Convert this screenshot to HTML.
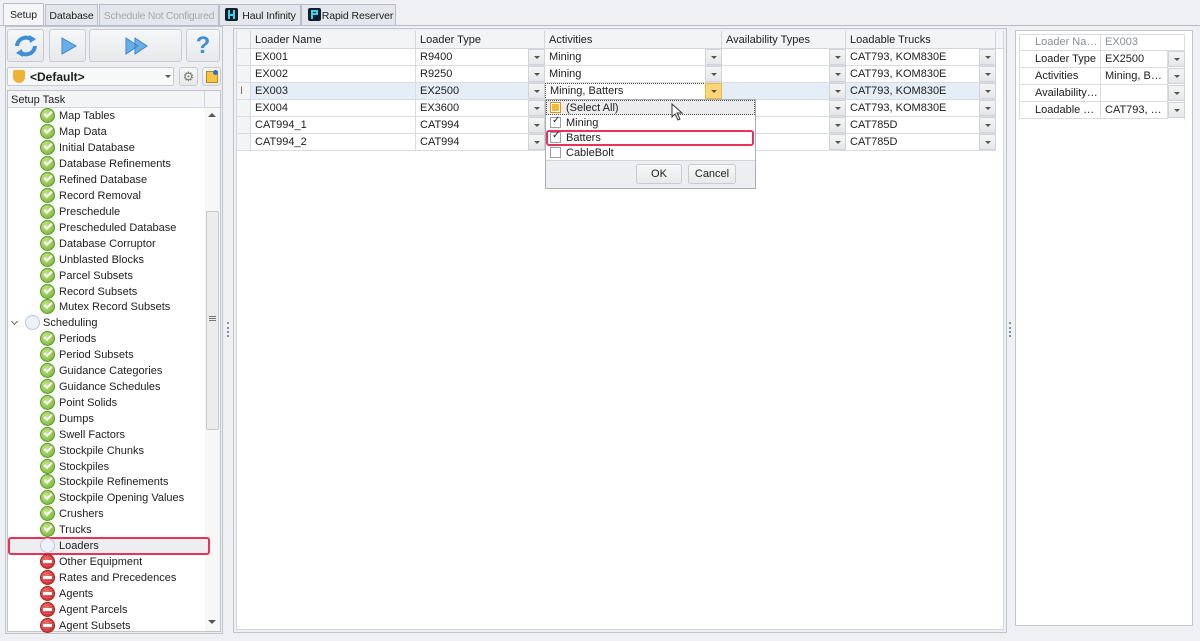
<!DOCTYPE html>
<html><head><meta charset="utf-8"><style>
*{box-sizing:border-box;margin:0;padding:0}
body{width:1200px;height:641px;background:#eef0f3;font:11px "Liberation Sans",sans-serif;color:#1e1e1e;position:relative;overflow:hidden}
.a{position:absolute}
.tab{position:absolute;top:4px;height:21px;border:1px solid #b9bec6;border-bottom:none;background:#e3e6ea;padding:5px 0 0;text-align:center;font-size:10.5px;white-space:nowrap;overflow:hidden;letter-spacing:-0.1px}
.btn{position:absolute;border:1px solid #c7ccd3;border-radius:3px;background:linear-gradient(#f6f7f8,#e6e8eb)}
.tr{position:absolute;left:59px;height:16px;line-height:18px;white-space:nowrap}
.ic{position:absolute;left:40px;width:15px;height:15px;border-radius:50%}
.g{background:radial-gradient(circle at 40% 35%,#c4e88a,#6cae2c);border:1px solid #5c9a24}
.g:after{content:"";position:absolute;left:3px;top:2px;width:6px;height:3px;border-left:2px solid #fff;border-bottom:2px solid #fff;transform:rotate(-45deg)}
.r{background:radial-gradient(circle at 40% 35%,#f07070,#c22525);border:1px solid #a81c1c}
.r:after{content:"";position:absolute;left:2px;top:5px;width:9px;height:3px;background:#fff}
.e{background:#eef2f8;border:1px solid #b7c4d8}
.c{position:absolute;height:17px;line-height:17px;padding-left:4px;border-right:1px solid #d9dce0;border-bottom:1px solid #d9dce0;white-space:nowrap;overflow:hidden;text-overflow:ellipsis}
.dd{position:absolute;width:17px;height:16px;background:linear-gradient(#f4f5f6,#e4e6e9);border:1px solid #d0d3d8}
.dd:after{content:"";position:absolute;left:5px;top:6px;border:3px solid transparent;border-top:3px solid #555;border-bottom:none}
.h{position:absolute;top:31px;height:18px;line-height:18px;padding-left:4px;background:#f3f4f6;border-right:1px solid #d3d6db;border-bottom:1px solid #d3d6db}
.cb{position:absolute;left:5px;width:11px;height:11px;border:1px solid #9aa0a8;background:#fff}
</style></head><body>
<div class="tab" style="left:3px;width:41px;top:3px;height:23px;background:#f5f6f8">Setup</div>
<div class="tab" style="left:45px;width:53px">Database</div>
<div class="tab" style="left:99px;width:120px;color:#a5a8ad;letter-spacing:-0.3px">Schedule Not Configured</div>
<div class="tab" style="left:219px;width:82px;padding-left:18px">Haul Infinity</div>
<div class="a" style="left:225px;top:8px;width:13px;height:13px;background:#0f1d2e;border-radius:2px"><div class="a" style="left:3px;top:2px;width:2px;height:9px;background:#35d4e6"></div><div class="a" style="left:8px;top:2px;width:2px;height:9px;background:#35d4e6"></div><div class="a" style="left:3px;top:6px;width:7px;height:2px;background:#35d4e6"></div></div>
<div class="tab" style="left:301px;width:95px;padding-left:18px">Rapid Reserver</div>
<div class="a" style="left:308px;top:8px;width:13px;height:13px;background:#0f1d2e;border-radius:2px"><div class="a" style="left:3px;top:2px;width:7px;height:5px;border:2px solid #35d4e6"></div><div class="a" style="left:3px;top:7px;width:2px;height:4px;background:#35d4e6"></div></div>
<div class="a" style="left:0;top:25px;width:1200px;height:1px;background:#b9bec6"></div>

<div class="a" style="left:5px;top:26px;width:218px;height:608px;background:#eceef1;border:1px solid #c0c5cc"></div>
<div class="btn" style="left:7px;top:29px;width:37px;height:33px"><svg class="a" style="left:3px;top:2px" width="30" height="28" viewBox="0 0 30 28"><path d="M6 14a9 9 0 0 1 15-6" fill="none" stroke="#3d8fd6" stroke-width="4"/><path d="M24 14a9 9 0 0 1-15 6" fill="none" stroke="#3d8fd6" stroke-width="4"/><path d="M18 3l7 4-6 4z M12 25l-7-4 6-4z" fill="#3d8fd6"/></svg></div>
<div class="btn" style="left:49px;top:29px;width:37px;height:33px"><svg class="a" style="left:10px;top:7px" width="18" height="18"><path d="M2 1L16 9 2 17z" fill="#6aaee8" stroke="#3d85c8"/></svg></div>
<div class="btn" style="left:89px;top:29px;width:93px;height:33px"><svg class="a" style="left:34px;top:7px" width="26" height="18"><path d="M2 1L14 9 2 17z M11 1L23 9 11 17z" fill="#6aaee8" stroke="#3d85c8"/></svg></div>
<div class="btn" style="left:186px;top:29px;width:34px;height:33px;text-align:center;font:bold 24px 'Liberation Sans';color:#3d8fd6;line-height:31px">?</div>
<div class="btn" style="left:7px;top:67px;width:167px;height:19px;background:#f7f8f9;border-radius:2px"><div class="a" style="left:5px;top:2px;width:12px;height:13px;background:#f0b13a;border-radius:2px 2px 6px 6px"></div><span class="a" style="left:22px;top:2px;font-weight:bold;font-size:12px">&lt;Default&gt;</span><div class="a" style="left:157px;top:7px;border:3px solid transparent;border-top:3px solid #555"></div></div>
<div class="btn" style="left:179px;top:67px;width:19px;height:19px;text-align:center;line-height:17px;color:#777;font-size:13px">⚙</div>
<div class="btn" style="left:202px;top:67px;width:19px;height:19px"><div class="a" style="left:3px;top:3px;width:12px;height:12px;background:#f5c542;border:1px solid #b88a1a"></div><div class="a" style="left:10px;top:2px;width:5px;height:5px;border-radius:50%;background:#2d6fd0"></div></div>
<div class="a" style="left:7px;top:90px;width:214px;height:542px;background:#fff;border:1px solid #c0c5cc"></div>
<div class="a" style="left:8px;top:91px;width:212px;height:17px;background:#f3f4f6;border-bottom:1px solid #d3d6db;padding:3px 3px">Setup Task</div>
<div class="a" style="left:204px;top:91px;width:1px;height:17px;background:#d3d6db"></div>
<div class="a" style="left:205px;top:108px;width:15px;height:523px;background:#f7f7f8"></div>
<div class="a" style="left:208px;top:113px;border:4px solid transparent;border-bottom:4px solid #555;border-top:none"></div>
<div class="a" style="left:208px;top:620px;border:4px solid transparent;border-top:4px solid #555;border-bottom:none"></div>
<div class="a" style="left:206px;top:211px;width:13px;height:219px;background:#ececed;border:1px solid #c5c8cc;border-radius:2px"></div>
<div class="a" style="left:209px;top:316px;width:7px;height:5px;border-top:1px solid #777;border-bottom:1px solid #777"><div style="margin-top:1px;height:1px;background:#777"></div></div>
<div class="a" style="left:8px;top:537px;width:202px;height:18px;background:#eceeef;border:2px solid #e8325a;border-radius:3px"></div>

<div class="ic g" style="top:108px"></div><div class="tr" style="top:107px">Map Tables</div>
<div class="ic g" style="top:124px"></div><div class="tr" style="top:123px">Map Data</div>
<div class="ic g" style="top:140px"></div><div class="tr" style="top:139px">Initial Database</div>
<div class="ic g" style="top:156px"></div><div class="tr" style="top:155px">Database Refinements</div>
<div class="ic g" style="top:172px"></div><div class="tr" style="top:171px">Refined Database</div>
<div class="ic g" style="top:188px"></div><div class="tr" style="top:187px">Record Removal</div>
<div class="ic g" style="top:204px"></div><div class="tr" style="top:203px">Preschedule</div>
<div class="ic g" style="top:220px"></div><div class="tr" style="top:219px">Prescheduled Database</div>
<div class="ic g" style="top:236px"></div><div class="tr" style="top:235px">Database Corruptor</div>
<div class="ic g" style="top:252px"></div><div class="tr" style="top:251px">Unblasted Blocks</div>
<div class="ic g" style="top:268px"></div><div class="tr" style="top:267px">Parcel Subsets</div>
<div class="ic g" style="top:284px"></div><div class="tr" style="top:283px">Record Subsets</div>
<div class="ic g" style="top:299px"></div><div class="tr" style="top:298px">Mutex Record Subsets</div>
<div class="a" style="left:12px;top:319px;width:5px;height:5px;border-right:1px solid #666;border-bottom:1px solid #666;transform:rotate(45deg)"></div>
<div class="ic e" style="left:25px;top:315px"></div><div class="tr" style="left:43px;top:314px">Scheduling</div>
<div class="ic g" style="top:331px"></div><div class="tr" style="top:330px">Periods</div>
<div class="ic g" style="top:347px"></div><div class="tr" style="top:346px">Period Subsets</div>
<div class="ic g" style="top:363px"></div><div class="tr" style="top:362px">Guidance Categories</div>
<div class="ic g" style="top:379px"></div><div class="tr" style="top:378px">Guidance Schedules</div>
<div class="ic g" style="top:395px"></div><div class="tr" style="top:394px">Point Solids</div>
<div class="ic g" style="top:411px"></div><div class="tr" style="top:410px">Dumps</div>
<div class="ic g" style="top:427px"></div><div class="tr" style="top:426px">Swell Factors</div>
<div class="ic g" style="top:443px"></div><div class="tr" style="top:442px">Stockpile Chunks</div>
<div class="ic g" style="top:459px"></div><div class="tr" style="top:458px">Stockpiles</div>
<div class="ic g" style="top:474px"></div><div class="tr" style="top:473px">Stockpile Refinements</div>
<div class="ic g" style="top:490px"></div><div class="tr" style="top:489px">Stockpile Opening Values</div>
<div class="ic g" style="top:506px"></div><div class="tr" style="top:505px">Crushers</div>
<div class="ic g" style="top:522px"></div><div class="tr" style="top:521px">Trucks</div>
<div class="ic e" style="top:538px"></div><div class="tr" style="top:537px">Loaders</div>
<div class="ic r" style="top:554px"></div><div class="tr" style="top:553px">Other Equipment</div>
<div class="ic r" style="top:570px"></div><div class="tr" style="top:569px">Rates and Precedences</div>
<div class="ic r" style="top:586px"></div><div class="tr" style="top:585px">Agents</div>
<div class="ic r" style="top:602px"></div><div class="tr" style="top:601px">Agent Parcels</div>
<div class="ic r" style="top:618px"></div><div class="tr" style="top:617px">Agent Subsets</div>
<div class="a" style="left:0;top:634px;width:1200px;height:7px;background:#eef0f3"></div>

<div class="a" style="left:227px;top:322px;width:2px;height:15px;border-left:2px dotted #8a8f96"></div>
<div class="a" style="left:1009px;top:322px;width:2px;height:15px;border-left:2px dotted #8a8f96"></div>

<div class="a" style="left:233px;top:28px;width:774px;height:605px;background:#fff;border:1px solid #c0c5cc;box-shadow:inset 0 0 0 3px #eef0f3"></div>
<div class="a" style="left:236px;top:31px;width:768px;height:599px;background:#fff;border:1px solid #d3d6db"></div>
<div class="h" style="left:237px;width:14px"></div>
<div class="h" style="left:251px;width:165px">Loader Name</div>
<div class="h" style="left:416px;width:129px">Loader Type</div>
<div class="h" style="left:545px;width:177px">Activities</div>
<div class="h" style="left:722px;width:124px">Availability Types</div>
<div class="h" style="left:846px;width:150px">Loadable Trucks</div>
<div class="h" style="left:996px;width:8px"></div>

<div class="a" style="left:237px;top:83px;width:759px;height:17px;background:#e5edf6"></div>
<div class="c" style="left:237px;top:49px;width:14px;background:#f3f4f6"></div><div class="c" style="left:251px;top:49px;width:165px">EX001</div><div class="c" style="left:416px;top:49px;width:129px">R9400</div><div class="c" style="left:545px;top:49px;width:177px">Mining</div><div class="c" style="left:722px;top:49px;width:124px"></div><div class="c" style="left:846px;top:49px;width:150px">CAT793, KOM830E</div>
<div class="c" style="left:237px;top:66px;width:14px;background:#f3f4f6"></div><div class="c" style="left:251px;top:66px;width:165px">EX002</div><div class="c" style="left:416px;top:66px;width:129px">R9250</div><div class="c" style="left:545px;top:66px;width:177px">Mining</div><div class="c" style="left:722px;top:66px;width:124px"></div><div class="c" style="left:846px;top:66px;width:150px">CAT793, KOM830E</div>
<div class="c" style="left:237px;top:83px;width:14px;background:#f3f4f6;color:#777;padding-left:3px">I</div><div class="c" style="left:251px;top:83px;width:165px">EX003</div><div class="c" style="left:416px;top:83px;width:129px">EX2500</div><div class="c" style="left:545px;top:83px;width:177px;border:1px dotted #555;background:#fff;line-height:15px">Mining, Batters</div><div class="c" style="left:722px;top:83px;width:124px"></div><div class="c" style="left:846px;top:83px;width:150px">CAT793, KOM830E</div>
<div class="c" style="left:237px;top:100px;width:14px;background:#f3f4f6"></div><div class="c" style="left:251px;top:100px;width:165px">EX004</div><div class="c" style="left:416px;top:100px;width:129px">EX3600</div><div class="c" style="left:545px;top:100px;width:177px"></div><div class="c" style="left:722px;top:100px;width:124px"></div><div class="c" style="left:846px;top:100px;width:150px">CAT793, KOM830E</div>
<div class="c" style="left:237px;top:117px;width:14px;background:#f3f4f6"></div><div class="c" style="left:251px;top:117px;width:165px">CAT994_1</div><div class="c" style="left:416px;top:117px;width:129px">CAT994</div><div class="c" style="left:545px;top:117px;width:177px"></div><div class="c" style="left:722px;top:117px;width:124px"></div><div class="c" style="left:846px;top:117px;width:150px">CAT785D</div>
<div class="c" style="left:237px;top:134px;width:14px;background:#f3f4f6"></div><div class="c" style="left:251px;top:134px;width:165px">CAT994_2</div><div class="c" style="left:416px;top:134px;width:129px">CAT994</div><div class="c" style="left:545px;top:134px;width:177px"></div><div class="c" style="left:722px;top:134px;width:124px"></div><div class="c" style="left:846px;top:134px;width:150px">CAT785D</div>

<div class="dd" style="left:528px;top:49px"></div><div class="dd" style="left:528px;top:66px"></div><div class="dd" style="left:528px;top:83px"></div><div class="dd" style="left:528px;top:100px"></div><div class="dd" style="left:528px;top:117px"></div><div class="dd" style="left:528px;top:134px"></div>
<div class="dd" style="left:705px;top:49px"></div><div class="dd" style="left:705px;top:66px"></div><div class="dd" style="left:705px;top:83px;background:#fbd674;border-color:#e8b84a"></div>
<div class="dd" style="left:829px;top:49px"></div><div class="dd" style="left:829px;top:66px"></div><div class="dd" style="left:829px;top:83px"></div><div class="dd" style="left:829px;top:100px"></div><div class="dd" style="left:829px;top:117px"></div><div class="dd" style="left:829px;top:134px"></div>
<div class="dd" style="left:979px;top:49px"></div><div class="dd" style="left:979px;top:66px"></div><div class="dd" style="left:979px;top:83px"></div><div class="dd" style="left:979px;top:100px"></div><div class="dd" style="left:979px;top:117px"></div><div class="dd" style="left:979px;top:134px"></div>

<div class="a" style="left:545px;top:99px;width:211px;height:90px;background:#fff;border:1px solid #a9aeb5"></div>
<div class="a" style="left:546px;top:100px;width:209px;height:15px;background:#ececee;border:1px dotted #555"></div>
<div class="cb" style="left:550px;top:102px;border-color:#d89a1a;background:#fff"><div style="margin:1px;height:7px;background:#f3b935"></div></div>
<div class="a" style="left:566px;top:102px">(Select All)</div>
<div class="cb" style="left:550px;top:117px"></div><div class="a" style="left:552px;top:115px;font-size:10px">✓</div><div class="a" style="left:566px;top:117px">Mining</div>
<div class="a" style="left:546px;top:130px;width:208px;height:16px;border:2px solid #e8325a;border-radius:3px"></div>
<div class="cb" style="left:550px;top:132px"></div><div class="a" style="left:552px;top:130px;font-size:10px">✓</div><div class="a" style="left:566px;top:132px">Batters</div>
<div class="cb" style="left:550px;top:147px"></div><div class="a" style="left:566px;top:147px">CableBolt</div>
<div class="a" style="left:546px;top:160px;width:209px;height:28px;background:#eceef1;border-top:1px solid #d3d6db"></div>
<div class="btn" style="left:636px;top:164px;width:46px;height:20px;text-align:center;line-height:18px">OK</div>
<div class="btn" style="left:688px;top:164px;width:48px;height:20px;text-align:center;line-height:18px">Cancel</div>
<svg class="a" style="left:671px;top:103px" width="14" height="18"><path d="M1 1v13l3-3 3 6 2-1-3-6h5z" fill="#fff" stroke="#333"/></svg>

<div class="a" style="left:1015px;top:30px;width:178px;height:596px;background:#fff;border:1px solid #c0c5cc"></div>
<div class="a" style="left:1019px;top:34px;width:166px;height:85px;border:1px solid #d9dce0;border-bottom:none"></div>
<div class="c" style="left:1019px;top:34px;width:82px;padding-left:16px;color:#8a8f96">Loader Name</div><div class="c" style="left:1101px;top:34px;width:84px;color:#8a8f96">EX003</div>
<div class="c" style="left:1019px;top:51px;width:82px;padding-left:16px">Loader Type</div><div class="c" style="left:1101px;top:51px;width:67px">EX2500</div>
<div class="c" style="left:1019px;top:68px;width:82px;padding-left:16px">Activities</div><div class="c" style="left:1101px;top:68px;width:67px">Mining, Batters</div>
<div class="c" style="left:1019px;top:85px;width:82px;padding-left:16px">Availability Types</div><div class="c" style="left:1101px;top:85px;width:67px"></div>
<div class="c" style="left:1019px;top:102px;width:82px;padding-left:16px">Loadable Trucks</div><div class="c" style="left:1101px;top:102px;width:67px">CAT793, KOM830E</div>
<div class="dd" style="left:1168px;top:51px"></div><div class="dd" style="left:1168px;top:68px"></div><div class="dd" style="left:1168px;top:85px"></div><div class="dd" style="left:1168px;top:102px"></div>
</body></html>
